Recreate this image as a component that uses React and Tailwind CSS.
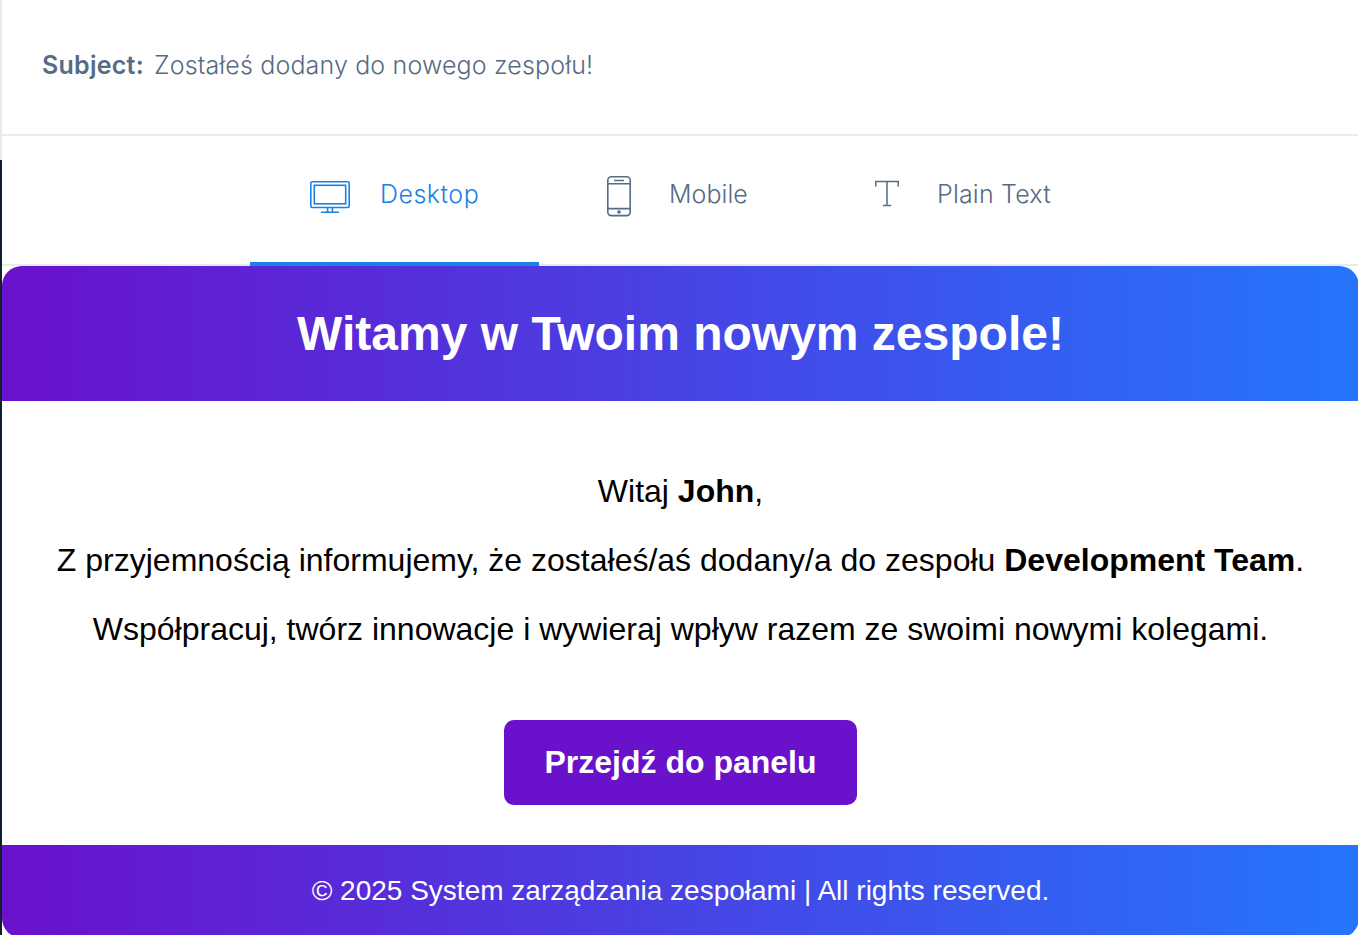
import React from "react";

function DesktopIcon() {
  return (
    <svg className="mt-5 h-[34px] w-[42px] shrink-0" viewBox="0 0 42 34" fill="none" stroke="currentColor" strokeWidth="1.6">
      <rect x="1.8" y="1.8" width="38.4" height="25.7" rx="1.5" />
      <rect x="5.3" y="5.3" width="31.4" height="18.5" />
      <path d="M18.6 27.4v4.6M23.4 27.4v4.6M12 32.3h18" />
    </svg>
  );
}

function MobileIcon() {
  return (
    <svg className="mt-[15px] h-[42px] w-[26px] shrink-0" viewBox="0 0 26 42" fill="none" stroke="currentColor" strokeWidth="1.6">
      <rect x="1.8" y="1.8" width="22.4" height="38.8" rx="3.5" />
      <path d="M1.8 8.7h22.4M1.8 33.6h22.4M8 5.5h10" />
      <circle cx="13" cy="37" r="1.8" fill="currentColor" stroke="none" />
    </svg>
  );
}

function TextIcon() {
  return (
    <svg className="mt-5 h-7 w-[26px] shrink-0" viewBox="0 0 26 28" fill="none" stroke="currentColor" strokeWidth="1.5">
      <path d="M1.8 6.5V1.5h22.4v5M13 1.5v24M8.8 25.4h8.4" />
    </svg>
  );
}

const tabText = "pt-[18px] leading-8 whitespace-nowrap";

export default function App() {
  return (
    <div className="flex h-[935px] w-[1358px] overflow-hidden bg-white">
      <div className="flex w-0.5 shrink-0 flex-col">
        <div className="h-40 bg-[#e7ebee]" />
        <div className="flex-1 bg-[#131f2e]" />
      </div>
      <div className="flex w-[1357px] shrink-0 flex-col">
        <div className="flex h-[136px] shrink-0 border-b-2 border-[#e7ebee] pt-[49px] pl-10 font-['Inter',sans-serif] text-[25px] leading-8 text-[#566b84]">
          <span className="w-[112px] font-semibold tracking-[0.25px]">Subject:</span>
          <span className="font-light tracking-[0.15px]">Zostałeś dodany do nowego zespołu!</span>
        </div>
        <div className="flex h-[130px] shrink-0 border-b-2 border-[#e7ebee] pl-[248px] font-['Inter',sans-serif] text-[25px] font-light tracking-[0.2px] text-[#566b84]">
          <div className="-mb-0.5 flex w-[289px] border-b-4 border-[#1a82e2] pt-6 pl-[59px] text-[#1a82e2]">
            <DesktopIcon />
            <span className={`${tabText} ml-[29px] tracking-[0.5px]`}>Desktop</span>
          </div>
          <div className="flex w-[268px] pt-6 pl-[67px]">
            <MobileIcon />
            <span className={`${tabText} ml-[37px] tracking-[0.05px]`}>Mobile</span>
          </div>
          <div className="flex pt-6 pl-[67px]">
            <TextIcon />
            <span className={`${tabText} ml-[37px]`}>Plain Text</span>
          </div>
        </div>
        <div className="flex shrink-0 flex-col font-['Liberation_Sans',Arial,sans-serif] text-[32px] text-black">
          <div className="flex h-[135px] justify-center rounded-t-[20px] bg-[linear-gradient(to_right,#6a11cb,#2575fc)] pt-10">
            <h1 className="text-[48px] leading-[56px] font-bold text-white">Witamy w Twoim nowym zespole!</h1>
          </div>
          <div className="flex h-[444px] flex-col items-center pt-[72px]">
            <p className="h-[69px] leading-9">Witaj <strong>John</strong>,</p>
            <p className="h-[69px] leading-9 whitespace-nowrap">Z przyjemnością informujemy, że zostałeś/aś dodany/a do zespołu <strong>Development Team</strong>.</p>
            <p className="h-[109px] leading-9 whitespace-nowrap">Współpracuj, twórz innowacje i wywieraj wpływ razem ze swoimi nowymi kolegami.</p>
            <button className="flex h-[85px] w-[353px] items-center justify-center rounded-[10px] bg-[#6a11cb] pb-0.5 font-bold text-white">Przejdź do panelu</button>
          </div>
          <div className="flex h-[93px] justify-center rounded-b-[20px] bg-[linear-gradient(to_right,#6a11cb,#2575fc)] pt-[30px] text-[28px] leading-8 text-white">
            © 2025 System zarządzania zespołami | All rights reserved.
          </div>
        </div>
      </div>
    </div>
  );
}
